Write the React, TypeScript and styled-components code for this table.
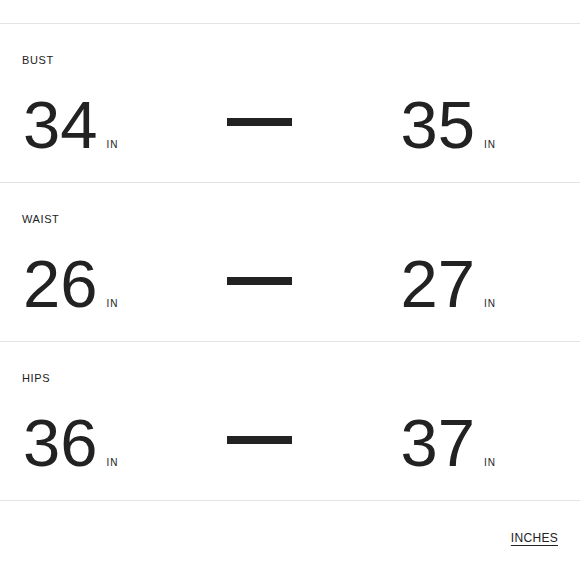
import styled, { createGlobalStyle } from "styled-components";

const GlobalStyle = createGlobalStyle`
    body {
        margin: 0;
        background: #ffffff;
        font-family: "Liberation Sans", Arial, sans-serif;
        color: #222222;
    }
`

const measurements = [
    {label: "BUST", from: 34, to: 35},
    {label: "WAIST", from: 26, to: 27},
    {label: "HIPS", from: 36, to: 37},
];

export default function App() {
    return (
        <Page>
            <GlobalStyle/>
            <List>
                {measurements.map((m) => (
                    <Section key={m.label}>
                        <Label>{m.label}</Label>
                        <Range>
                            <Value>
                                <Number>{m.from}</Number>
                                <Unit>IN</Unit>
                            </Value>
                            <Dash/>
                            <Value>
                                <Number>{m.to}</Number>
                                <Unit>IN</Unit>
                            </Value>
                        </Range>
                    </Section>
                ))}
            </List>
            <Footer>
                <UnitToggle>INCHES</UnitToggle>
            </Footer>
        </Page>
    );
}

const Page = styled.div`
    padding-top: 23px;
    width: 580px;
`
const List = styled.div`
    border-top: 1px solid #e3e3e3;
`
const Section = styled.section`
    display: flex;
    flex-direction: column;
    gap: 24px;
    padding: 30px 84px 24px 22px;
    border-bottom: 1px solid #e3e3e3;
`
const Label = styled.span`
    font-size: 11px;
    line-height: 13px;
    letter-spacing: 0.6px;
`
const Range = styled.div`
    display: flex;
    align-items: center;
    justify-content: space-between;
`
const Value = styled.div`
    display: flex;
    align-items: baseline;
`
const Number = styled.span`
    font-size: 67px;
    line-height: 67px;
    margin-left: 1px;
`
const Unit = styled.span`
    font-size: 10px;
    letter-spacing: 1px;
    margin-left: 9px;
`
const Dash = styled.span`
    width: 65px;
    height: 8px;
    background: #222222;
    margin-bottom: 5px;
`
const Footer = styled.div`
    display: flex;
    justify-content: flex-end;
    padding: 30px 22px 0;
`
const UnitToggle = styled.a`
    font-size: 12px;
    line-height: 15px;
    letter-spacing: 0.3px;
    color: #222222;
    text-decoration: underline;
    text-decoration-thickness: 1.5px;
    text-underline-offset: 3px;
    cursor: pointer;
`
